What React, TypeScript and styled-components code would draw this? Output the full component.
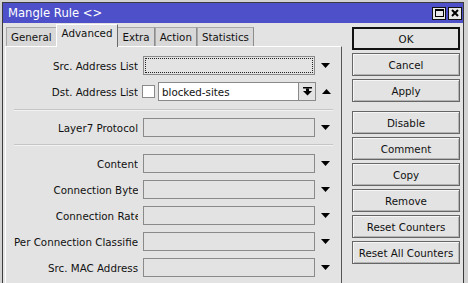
import styled, { createGlobalStyle } from "styled-components";

const GlobalStyle = createGlobalStyle`
  html, body {
    margin: 0;
    padding: 0;
    background: #d2d2d2;
    font-family: "DejaVu Sans", Verdana, sans-serif;
    font-size: 10.3px;
    color: #111;
  }
`;

const Screen = styled.div`
  width: 468px;
  height: 283px;
  overflow: hidden;
  padding: 2px 0 0 2px;
  box-sizing: border-box;
`;

const Window = styled.div`
  width: 462px;
  height: 320px;
  box-sizing: border-box;
  border: 1px solid #3c3c3c;
  background: #e3e3e3;
  display: flex;
  flex-direction: column;
`;

const TitleBar = styled.div`
  height: 20px;
  background: #4d50c9;
  color: #fff;
  font-size: 11.6px;
  display: flex;
  align-items: center;
  justify-content: space-between;
  padding: 0 1px 0 5px;
`;

const TitleButtons = styled.div`
  display: flex;
  gap: 2px;
`;

const TitleButton = styled.div`
  width: 14px;
  height: 13px;
  box-sizing: border-box;
  border: 1px solid #111;
  background: #e8e8e8;
  display: flex;
  align-items: center;
  justify-content: center;
`;

const Body = styled.div`
  flex: 1;
  display: flex;
`;

const Main = styled.div`
  display: flex;
  flex-direction: column;
  margin-left: 2px;
  width: 337px;
`;

const TabBar = styled.div`
  display: flex;
  align-items: flex-end;
  height: 23px;
  padding-left: 1px;
  position: relative;
  z-index: 1;
`;

const Tab = styled.div<{ $active?: boolean }>`
  box-sizing: border-box;
  height: ${(p) => (p.$active ? 23 : 19)}px;
  padding: ${(p) => (p.$active ? "2px 5px 0" : "3px 4px 0")};
  margin: ${(p) => (p.$active ? "0 -1px -1px" : "0")};
  background: ${(p) => (p.$active ? "#e3e3e3" : "#d8d8d8")};
  border-top: 1px solid ${(p) => (p.$active ? "#fff" : "#a8a8a8")};
  border-left: 1px solid ${(p) => (p.$active ? "#fff" : "#a8a8a8")};
  border-right: 1px solid ${(p) => (p.$active ? "#6a6a6a" : "#8c8c8c")};
  position: relative;
  z-index: ${(p) => (p.$active ? 2 : 0)};
  white-space: nowrap;
  display: flex;
  align-items: flex-start;
  justify-content: center;
`;

const Panel = styled.div`
  flex: 1;
  border-top: 1px solid #fff;
  border-left: 1px solid #fff;
  border-right: 1px solid #555;
  padding: 9px 8px 0 8px;
  display: flex;
  flex-direction: column;
`;

const Section = styled.div`
  display: flex;
  flex-direction: column;
  gap: 7px;
`;

const Separator = styled.div<{ $above: number; $below: number }>`
  border-top: 1px solid #c6c6c6;
  border-bottom: 1px solid #f2f2f2;
  margin: ${(p) => p.$above}px 0 ${(p) => p.$below}px;
`;

const Row = styled.div`
  display: flex;
  align-items: center;
  height: 19px;
`;

const Label = styled.div`
  width: 124px;
  flex: none;
  text-align: right;
  white-space: nowrap;
  overflow: hidden;
  margin-right: 5px;
`;

const LabelText = styled.span<{ $cut?: number }>`
  margin-right: ${(p) => -(p.$cut || 0)}px;
`;

const Field = styled.div<{ $width: number; $white?: boolean; $focused?: boolean }>`
  width: ${(p) => p.$width}px;
  height: 19px;
  box-sizing: border-box;
  border: 1px solid #8a8a8a;
  background: ${(p) => (p.$white ? "#fff" : "#e3e3e3")};
  position: relative;
  padding-left: 3px;
  display: flex;
  align-items: center;
  flex: none;
  &::after {
    content: "";
    display: ${(p) => (p.$focused ? "block" : "none")};
    position: absolute;
    inset: 1px;
    border: 1px dotted #222;
  }
`;

const Check = styled.div`
  width: 13px;
  height: 13px;
  box-sizing: border-box;
  border: 1px solid #8a8a8a;
  background: #fff;
  margin: 0 3px 0 -1px;
  flex: none;
`;

const ComboButton = styled.div`
  width: 17px;
  height: 19px;
  box-sizing: border-box;
  border: 1px solid #8a8a8a;
  border-left: none;
  background: #e3e3e3;
  display: flex;
  align-items: center;
  justify-content: center;
  flex: none;
`;

const ArrowCell = styled.div`
  margin-left: 5px;
  width: 10px;
  display: flex;
  align-items: center;
  justify-content: center;
`;

const Side = styled.div`
  display: flex;
  flex-direction: column;
  gap: 3px;
  padding-top: 4px;
  margin-left: 10px;
  width: 108px;
`;

const Button = styled.div<{ $default?: boolean; $spaced?: boolean }>`
  height: 23px;
  box-sizing: border-box;
  border: ${(p) => (p.$default ? "2px solid #111" : "1px solid #666")};
  box-shadow: ${(p) => (p.$default ? "none" : "inset 1px 1px 0 #f6f6f6, inset -1px -1px 0 #b4b4b4")};
  background: #e3e3e3;
  display: flex;
  align-items: center;
  justify-content: center;
  white-space: nowrap;
  margin-top: ${(p) => (p.$spaced ? 6 : 0)}px;
`;

function Arrow({ up }: { up?: boolean }) {
  return (
    <svg width="9" height="5" viewBox="0 0 9 5">
      <polygon points={up ? "0,5 9,5 4.5,0" : "0,0 9,0 4.5,5"} fill="#000" />
    </svg>
  );
}

function ComboIcon() {
  return (
    <svg width="9" height="9" viewBox="0 0 9 9">
      <rect x="0" y="0" width="9" height="1.5" fill="#000" />
      <rect x="3" y="1.5" width="3" height="3" fill="#000" />
      <polygon points="0,4 9,4 4.5,8.5" fill="#000" />
    </svg>
  );
}

const tabs = ["General", "Advanced", "Extra", "Action", "Statistics"];

const lowerRows: { label: string; cut?: number }[] = [
  { label: "Content" },
  { label: "Connection Bytes", cut: 6 },
  { label: "Connection Rate", cut: 3 },
  { label: "Per Connection Classifier" },
  { label: "Src. MAC Address" },
];

const buttons = ["OK", "Cancel", "Apply", "Disable", "Comment", "Copy", "Remove", "Reset Counters", "Reset All Counters"];

function SelectRow({ label, cut, focused }: { label: string; cut?: number; focused?: boolean }) {
  return (
    <Row>
      <Label>
        <LabelText $cut={cut}>{label}</LabelText>
      </Label>
      <Field $width={172} $focused={focused} />
      <ArrowCell>
        <Arrow />
      </ArrowCell>
    </Row>
  );
}

export default function App() {
  return (
    <Screen>
      <GlobalStyle />
      <Window>
        <TitleBar>
          <span>Mangle Rule &lt;&gt;</span>
          <TitleButtons>
            <TitleButton>
              <svg width="9" height="8" viewBox="0 0 9 8">
                <rect x="0.5" y="0.5" width="8" height="7" fill="none" stroke="#000" />
                <rect x="0" y="0" width="9" height="2" fill="#000" />
              </svg>
            </TitleButton>
            <TitleButton>
              <svg width="8" height="8" viewBox="0 0 8 8">
                <path d="M1 1 L7 7 M7 1 L1 7" stroke="#000" strokeWidth="2" />
              </svg>
            </TitleButton>
          </TitleButtons>
        </TitleBar>
        <Body>
          <Main>
            <TabBar>
              {tabs.map((t) => (
                <Tab key={t} $active={t === "Advanced"}>
                  {t}
                </Tab>
              ))}
            </TabBar>
            <Panel>
              <Section>
                <SelectRow label="Src. Address List" focused />
                <Row>
                  <Label>Dst. Address List</Label>
                  <Check />
                  <Field $width={141} $white>
                    blocked-sites
                  </Field>
                  <ComboButton>
                    <ComboIcon />
                  </ComboButton>
                  <ArrowCell>
                    <Arrow up />
                  </ArrowCell>
                </Row>
              </Section>
              <Separator $above={8} $below={7} />
              <Section>
                <SelectRow label="Layer7 Protocol" />
              </Section>
              <Separator $above={7} $below={8} />
              <Section>
                {lowerRows.map((r) => (
                  <SelectRow key={r.label} label={r.label} cut={r.cut} />
                ))}
              </Section>
            </Panel>
          </Main>
          <Side>
            {buttons.map((b) => (
              <Button key={b} $default={b === "OK"} $spaced={b === "Disable"}>
                {b}
              </Button>
            ))}
          </Side>
        </Body>
      </Window>
    </Screen>
  );
}
